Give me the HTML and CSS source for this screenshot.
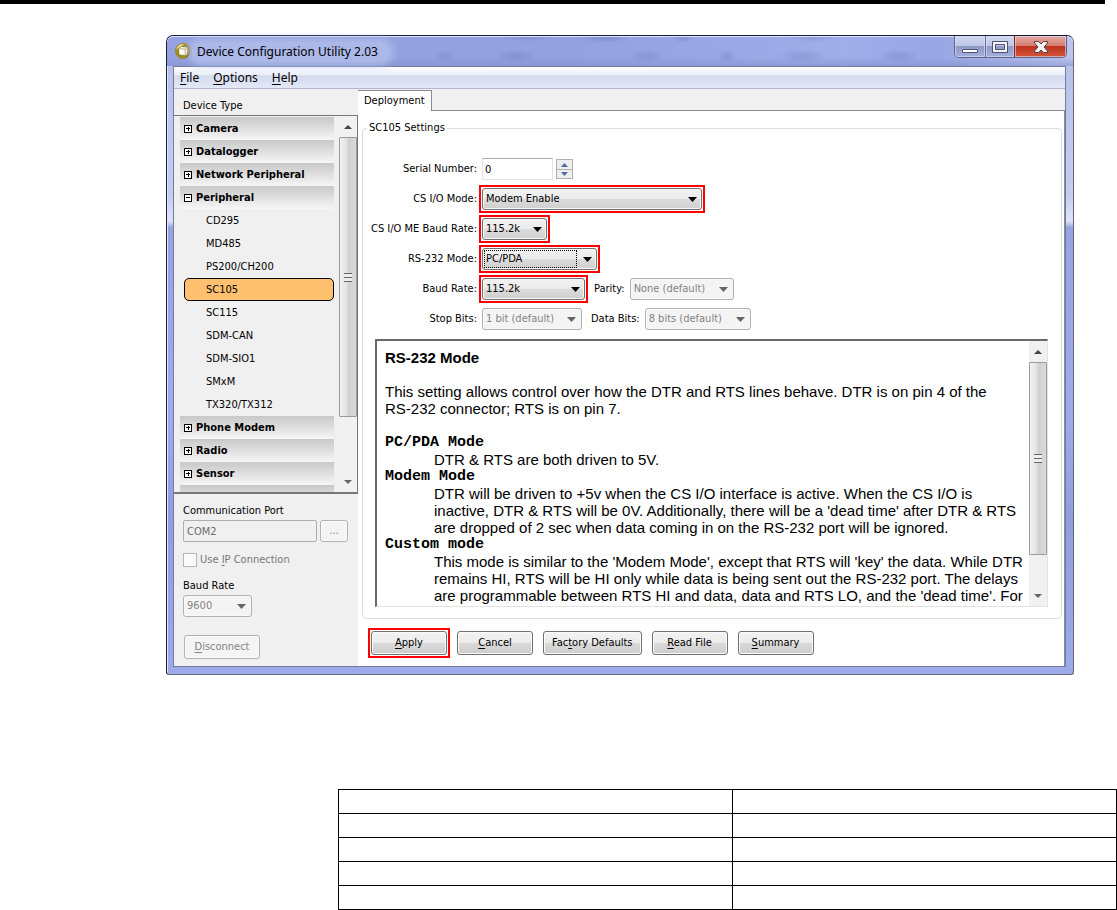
FILE: index.html
```
<!DOCTYPE html>
<html lang="en">
<head>
<meta charset="utf-8">
<title>Device Configuration Utility 2.03</title>
<link rel="stylesheet" href="styles.css">
</head>
<body>
<hr class="page-rule">
<main class="window">
  <header class="titlebar">
    <svg class="app-icon" viewBox="0 0 16 16" aria-hidden="true">
      <circle cx="8" cy="8" r="8" fill="#a08a20"/>
      <path d="M1 7A7 7 0 0 1 9 1L6 4 3 5Z" fill="#e6dc9a"/>
      <path d="M9 15A7 7 0 0 0 15 8L12 12Z" fill="#6b5508"/>
      <path d="M3.500 5.500 6 3.500 12 4 12.800 5 12.500 11 10.500 12.500 4 12Z" fill="#fffef2" stroke="#74600f" stroke-width=".6"/>
      <path d="M3.500 5.500 10 6.200 12.500 4.500M10 6.200 10.500 12.500" fill="none" stroke="#b3a45c" stroke-width=".8"/>
    </svg>
    <h1 class="title">Device Configuration Utility 2.03</h1>
    <div class="caption-buttons">
      <button class="caption minimize" aria-label="Minimize"><svg viewBox="0 0 18 14" width="18" height="14"><rect x="1.500" y="9.500" width="15" height="3" rx=".5" fill="#fff" stroke="#4c5270"/></svg></button>
      <button class="caption maximize" aria-label="Maximize"><svg viewBox="0 0 18 14" width="18" height="14"><path fill-rule="evenodd" d="M1.500 1.500h15v11h-15zM4.500 4.500v5h9v-5z" fill="#f4f4f8" stroke="#4c5270"/></svg></button>
      <button class="caption close" aria-label="Close"><svg viewBox="0 0 16 14" width="16" height="14"><path d="M1.500 1.500h4L8 4l2.500-2.500h4V3L11 7l3.500 4v1.500h-4L8 10l-2.500 2.500h-4V11L5 7 1.500 3Z" fill="#f4f4f4" stroke="#573b45"/></svg></button>
    </div>
  </header>

  <div class="client">
    <nav class="menubar">
      <button class="menu"><u>F</u>ile</button>
      <button class="menu"><u>O</u>ptions</button>
      <button class="menu"><u>H</u>elp</button>
    </nav>

    <div class="panes">
      <aside class="sidebar">
        <h2 class="side-title">Device Type</h2>
        <div class="device-list">
          <div class="tree">
            <button class="group"><i class="box plus"></i>Camera</button>
            <button class="group"><i class="box plus"></i>Datalogger</button>
            <button class="group"><i class="box plus"></i>Network Peripheral</button>
            <button class="group"><i class="box"></i>Peripheral</button>
            <button class="device">CD295</button>
            <button class="device">MD485</button>
            <button class="device">PS200/CH200</button>
            <button class="device selected">SC105</button>
            <button class="device">SC115</button>
            <button class="device">SDM-CAN</button>
            <button class="device">SDM-SIO1</button>
            <button class="device">SMxM</button>
            <button class="device">TX320/TX312</button>
            <button class="group"><i class="box plus"></i>Phone Modem</button>
            <button class="group"><i class="box plus"></i>Radio</button>
            <button class="group"><i class="box plus"></i>Sensor</button>
            <div class="group"></div>
          </div>
          <div class="scrollbar list-scroll" aria-hidden="true">
            <span class="arrow up"></span><span class="thumb"></span><span class="track"></span><span class="arrow down"></span>
          </div>
        </div>
        <div class="connection">
          <label class="side-label" for="port">Communication Port</label>
          <div class="port-row">
            <input class="port" id="port" value="COM2" disabled>
            <button class="button browse" disabled aria-label="Browse ports">...</button>
          </div>
          <label class="check-row"><input class="check" type="checkbox" disabled><span>Use <u>I</u>P Connection</span></label>
          <label class="side-label" for="side-baud">Baud Rate</label>
          <select class="combo side-baud" id="side-baud" disabled><option>9600</option></select>
          <button class="button disconnect" disabled><u>D</u>isconnect</button>
        </div>
      </aside>

      <section class="content">
        <div class="tabs"><button class="tab">Deployment</button></div>
        <div class="page">
          <fieldset class="settings">
            <legend class="legend">SC105 Settings</legend>
            <div class="form">
              <label for="serial">Serial Number:</label>
              <div class="field">
                <input class="serial" id="serial" value="0">
                <div class="spinner">
                  <button class="spin" aria-label="Increase"><svg viewBox="0 0 7 4" width="7" height="4"><path d="M0 4 3.500 0 7 4Z"/></svg></button>
                  <button class="spin" aria-label="Decrease"><svg viewBox="0 0 7 4" width="7" height="4"><path d="M0 0H7L3.500 4Z"/></svg></button>
                </div>
              </div>
              <label for="cs-mode">CS I/O Mode:</label>
              <div class="field"><span class="marked"><select class="combo wide" id="cs-mode"><option>Modem Enable</option></select></span></div>
              <label for="cs-baud">CS I/O ME Baud Rate:</label>
              <div class="field"><span class="marked"><select class="combo narrow" id="cs-baud"><option>115.2k</option></select></span></div>
              <label for="rs-mode">RS-232 Mode:</label>
              <div class="field"><span class="marked focus"><select class="combo medium" id="rs-mode"><option>PC/PDA</option></select></span></div>
              <label for="baud">Baud Rate:</label>
              <div class="field">
                <span class="marked"><select class="combo baud" id="baud"><option>115.2k</option></select></span>
                <label class="second" for="parity">Parity:</label>
                <select class="combo parity" id="parity" disabled><option>None (default)</option></select>
              </div>
              <label for="stop">Stop Bits:</label>
              <div class="field">
                <select class="combo stop" id="stop" disabled><option>1 bit (default)</option></select>
                <label class="second" for="data">Data Bits:</label>
                <select class="combo data" id="data" disabled><option>8 bits (default)</option></select>
              </div>
            </div>
            <div class="help">
              <article class="help-text">
                <h3>RS-232 Mode</h3>
                <p>This setting allows control over how the DTR and RTS lines behave. DTR is on pin 4 of the<br>RS-232 connector; RTS is on pin 7.</p>
                <dl>
                  <dt>PC/PDA Mode</dt>
                  <dd>DTR &amp; RTS are both driven to 5V.</dd>
                  <dt>Modem Mode</dt>
                  <dd>DTR will be driven to +5v when the CS I/O interface is active. When the CS I/O is<br>inactive, DTR &amp; RTS will be 0V. Additionally, there will be a 'dead time' after DTR &amp; RTS<br>are dropped of 2 sec when data coming in on the RS-232 port will be ignored.</dd>
                  <dt>Custom mode</dt>
                  <dd>This mode is similar to the 'Modem Mode', except that RTS will 'key' the data. While DTR<br>remains HI, RTS will be HI only while data is being sent out the RS-232 port. The delays<br>are programmable between RTS HI and data, data and RTS LO, and the 'dead time'. For</dd>
                </dl>
              </article>
              <div class="scrollbar help-scroll" aria-hidden="true">
                <span class="arrow up"></span><span class="thumb"></span><span class="track"></span><span class="arrow down"></span>
              </div>
            </div>
          </fieldset>
          <div class="actions">
            <span class="marked"><button class="button"><u>A</u>pply</button></span>
            <button class="button"><u>C</u>ancel</button>
            <button class="button">Fac<u>t</u>ory Defaults</button>
            <button class="button"><u>R</u>ead File</button>
            <button class="button"><u>S</u>ummary</button>
          </div>
        </div>
      </section>
    </div>
  </div>
</main>

<table class="grid">
  <colgroup><col class="first-col"><col></colgroup>
  <tbody>
    <tr><td></td><td></td></tr>
    <tr><td></td><td></td></tr>
    <tr><td></td><td></td></tr>
    <tr><td></td><td></td></tr>
    <tr><td></td><td></td></tr>
  </tbody>
</table>
</body>
</html>
```

FILE: styles.css
```
* { box-sizing: border-box; }

body {
  margin: 0;
  background: #fff;
  color: #000;
  font: 11px/16px "DejaVu Sans Condensed", "DejaVu Sans", sans-serif;
}

button, input, select { font: inherit; color: inherit; margin: 0; }
button { padding: 0; border: 0; background: none; }
u { text-underline-offset: 2px; }

.page-rule { margin: 0 12px 31px 0; border: 0; height: 4px; background: #000; }

/* Window frame */
.window {
  margin: 0 43px 0 166px;
  padding: 0 7px 7px 6px;
  border: 1px solid #1c1c38;
  border-bottom-color: #667;
  border-right-color: #667;
  border-radius: 7px 7px 3px 3px;
  background: linear-gradient(180deg, #b6c0e8 0, #c4cdf0 25%, #dfe4f8 29%, #96a5e0 30%, #9daceb 60%, #8f9edc 75%, #9dabe8 100%);
  box-shadow: inset 1px 1px 0 #dfe5fa;
}

.titlebar {
  display: flex;
  align-items: flex-start;
  height: 30px;
  margin: 0 -7px 0 -6px;
  padding: 0 6px 0 8px;
  border-radius: 6px 6px 0 0;
  box-shadow: inset 0 1px 0 #dde3fa;
  background:
    radial-gradient(ellipse 22px 7px at 349px 20px, #7080bb77, transparent),
    radial-gradient(ellipse 10px 7px at 278px 20px, #7080bb66, transparent),
    radial-gradient(ellipse 20px 7px at 480px 20px, #7080bb66, transparent),
    radial-gradient(ellipse 26px 5px at 438px 2px, #6676b477, transparent),
    radial-gradient(ellipse 26px 5px at 360px 1px, #6676b466, transparent),
    radial-gradient(ellipse 12px 5px at 516px 2px, #6676b466, transparent),
    radial-gradient(ellipse 10px 7px at 560px 20px, #7080bb66, transparent),
    radial-gradient(ellipse 26px 7px at 636px 20px, #7080bb66, transparent),
    radial-gradient(ellipse 28px 5px at 645px 1px, #7080bb66, transparent),
    radial-gradient(ellipse 22px 7px at 731px 20px, #7080bb66, transparent),
    linear-gradient(180deg, transparent 70%, #7f8dcb88),
    linear-gradient(90deg, #94a2e0 0, #93a1df 45%, #9fade9 75%, #98a6e4 85%, #bcc6ee 100%);
}

.app-icon { width: 16px; height: 16px; margin-top: 7px; }

.title {
  margin: 6px 0 0;
  padding: 0 12px 0 6px;
  border-radius: 10px;
  background: #b4c0eabb;
  box-shadow: 0 0 7px 4px #b4c0eabb;
  font: 12px/20px "Noto Sans", sans-serif;
}

.caption-buttons {
  display: flex;
  margin-left: auto;
  border: 1px solid #5c648c;
  border-top: 0;
  border-radius: 0 0 5px 5px;
  overflow: hidden;
}
.caption {
  display: flex;
  align-items: center;
  justify-content: center;
  width: 30px;
  height: 21px;
  background: linear-gradient(#d4daf0 0, #bcc5e4 48%, #8f9ac6 50%, #a5b1dc 100%);
  box-shadow: inset 0 0 0 1px #dce1f599;
}
.maximize { width: 29px; border-left: 1px solid #68709a; }
.close {
  width: 52px;
  border-left: 1px solid #7c2424;
  background: linear-gradient(#e5aba2 0, #d47b6e 48%, #bd3320 50%, #d4573c 100%);
}

.client { border: 1px solid #737b9e; background: #f0f0f0; }

.menubar {
  display: flex;
  gap: 14px;
  height: 22px;
  padding: 0 6px;
  border-bottom: 1px solid #b3b9cd;
  background: linear-gradient(#fff 0, #e8ecf7 38%, #d5dbee 42%, #e2e8f6 100%);
}
.menu { font: 12px/22px "Noto Sans", sans-serif; }

.panes { display: flex; }

/* Device sidebar */
.sidebar { width: 184px; flex: none; }
.side-title { margin: 0; padding: 9px 9px 1px; font: inherit; }

.device-list {
  display: flex;
  height: 379px;
  border: 1px solid #777;
  border-width: 1px 1px 2px 0;
}
.tree { flex: 1; padding: 1px 5px 0 6px; overflow: hidden; }
.group, .device {
  display: flex;
  align-items: center;
  width: 100%;
  height: 23px;
  text-align: left;
}
.group {
  gap: 4px;
  padding: 0 4px;
  background: linear-gradient(#c8c8c8, #f6f6f6);
  font-weight: bold;
}
.box {
  width: 8px;
  height: 8px;
  border: 1px solid #000;
  background: linear-gradient(#000, #000) center / 4px 1px no-repeat #fff;
}
.plus {
  background:
    linear-gradient(#000, #000) center / 4px 1px no-repeat,
    linear-gradient(#000, #000) center / 1px 4px no-repeat #fff;
}
.device { padding-left: 26px; }
.selected {
  width: calc(100% - 4px);
  margin-left: 4px;
  padding-left: 21px;
  border: 1px solid #000;
  border-radius: 5px;
  background: #ffc070;
}

/* Scrollbars */
.scrollbar { display: flex; flex-direction: column; width: 18px; flex: none; background: #f1f1f1; }
.arrow { height: 21px; flex: none; display: flex; align-items: center; justify-content: center; }
.arrow::before { content: ""; border: 4px solid transparent; border-top: 0; border-bottom: 4px solid #444; }
.arrow.down::before { border-top: 4px solid #666; border-bottom: 0; }
.thumb {
  flex: 281;
  border: 1px solid #9a9a9e;
  border-radius: 1px;
  background:
    repeating-linear-gradient(#666 0 1px, #eee 1px 4px) center / 8px 9px no-repeat,
    linear-gradient(90deg, #f3f3f4, #e0e0e2 45%, #cfcfd3 50%, #dadadd);
}
.track { flex: 54; }
.help-scroll .thumb { flex: 193; }
.help-scroll .track { flex: 30; }

/* Connection controls */
.connection {
  display: flex;
  flex-direction: column;
  align-items: flex-start;
  padding: 9px 9px 0;
}
.port-row { display: flex; gap: 3px; margin-top: 1px; }
.port {
  width: 134px;
  height: 22px;
  padding: 0 3px;
  border: 1px solid #abadb3;
  border-radius: 2px;
  background: #f0f0f0;
  color: #6d6d6d;
}
.check-row { display: flex; align-items: center; gap: 3px; margin: 10px 0; color: #777; }
.check {
  appearance: none;
  width: 14px;
  height: 14px;
  border: 1px solid #b6b6b6;
  background: #fafafa;
}
.side-baud { width: 69px; margin-top: 1px; }

/* Buttons and drop-downs */
.button {
  min-width: 76px;
  height: 24px;
  padding: 0 8px;
  border: 1px solid #707070;
  border-radius: 3px;
  background: linear-gradient(#f3f3f3 0, #ebebeb 48%, #dadada 50%, #cdcdcd 100%);
  box-shadow: inset 0 0 0 1px #fbfbfb;
}
.button:disabled { border-color: #adb2b5; background: #f4f4f4; color: #838383; }
.browse { min-width: 28px; height: 22px; }
.disconnect { margin: 18px 1px 0; }

.combo {
  appearance: none;
  height: 22px;
  padding: 0 20px 0 3px;
  border: 1px solid #707070;
  border-radius: 3px;
  background:
    url("data:image/svg+xml,%3Csvg xmlns='http://www.w3.org/2000/svg' width='9' height='5'%3E%3Cpath d='M0 0H9L4.500 5Z'/%3E%3C/svg%3E") right 4px center no-repeat,
    linear-gradient(#f2f2f2 0, #ebebeb 48%, #dcdcdc 50%, #cfcfcf 100%);
  box-shadow: inset 0 0 0 1px #f8f8f8;
}
.combo:disabled {
  border-color: #adb2b5;
  background:
    url("data:image/svg+xml,%3Csvg xmlns='http://www.w3.org/2000/svg' width='9' height='5'%3E%3Cpath fill='%23666' d='M0 0H9L4.500 5Z'/%3E%3C/svg%3E") right 5px center no-repeat,
    #f4f4f4;
  color: #838383;
  opacity: 1;
}
.marked { display: grid; outline: 2px solid #f00; outline-offset: 1px; }
.wide { width: 220px; }
.narrow { width: 65px; }
.medium { width: 115px; }
.baud { width: 103px; }
.parity { width: 104px; }
.stop { width: 100px; }
.data { width: 106px; }

.focus > *, .focus::after { grid-area: 1 / 1; }
.focus::after {
  content: "";
  z-index: 1;
  margin: 2px 20px 2px 2px;
  border: 1px dotted #000;
  pointer-events: none;
}

/* Settings page */
.content { flex: 1; min-width: 0; display: flex; flex-direction: column; }
.tabs { display: flex; height: 22px; padding-top: 1px; border-bottom: 1px solid #898c95; }
.tab {
  height: 21px;
  padding: 0 6px;
  border: 1px solid #898c95;
  border-width: 1px 1px 0 0;
  background: #fff;
}
.page { flex: 1; padding: 9px 2px 11px 4px; background: #fff; border-right: 1px solid #898c95; }
.settings {
  min-width: 0;
  margin: 0;
  padding: 18px 13px 11px 0;
  border: 1px solid #d5dfe5;
  border-radius: 4px;
}
.legend { margin-left: 4px; padding: 0 2px; }

.form {
  display: grid;
  grid-template-columns: 114px 1fr;
  grid-auto-rows: 30px;
  column-gap: 5px;
  align-items: center;
}
.form > label { text-align: right; white-space: nowrap; }
.field { display: flex; align-items: center; }
.second { margin: 0 5px 0 9px; }
.serial {
  width: 71px;
  height: 22px;
  padding: 0 2px;
  border: 1px solid #dde4ee;
  border-top-color: #abadb3;
}
.spinner { display: grid; margin-left: 3px; border: 1px solid #b0b0b4; }
.spin {
  display: flex;
  align-items: center;
  justify-content: center;
  width: 15px;
  height: 9px;
  background: #eee;
  fill: #5568a8;
}
.spin + .spin { border-top: 1px solid #b0b0b4; }

.help {
  display: flex;
  height: 268px;
  margin: 5px 0 0 12px;
  border: 1px solid #e3e3e3;
  border-top: 2px solid #696969;
  border-left: 2px solid #696969;
  overflow: hidden;
}
.help-text {
  flex: 1;
  min-width: 0;
  padding: 8px 0 0 8px;
  overflow: hidden;
  white-space: nowrap;
  font: 15px/17px "Liberation Sans", Arial, sans-serif;
}
.help-text h3 { margin: 0 0 17px; font: bold 15px/17px "Liberation Sans", Arial, sans-serif; }
.help-text p { margin: 0 0 17px; }
.help-text dl { margin: 0; }
.help-text dt { font: bold 15px/17px "Liberation Mono", monospace; }
.help-text dd { margin: 0 0 0 49px; }

.actions { display: flex; gap: 10px; padding: 12px 9px 0; }

/* Empty table */
.grid {
  width: calc(100% - 338px);
  margin: 114px 0 0 338px;
  border-collapse: collapse;
  table-layout: fixed;
}
.first-col { width: 394px; }
.grid td { height: 24px; padding: 0; border: 1px solid #000; }
```
